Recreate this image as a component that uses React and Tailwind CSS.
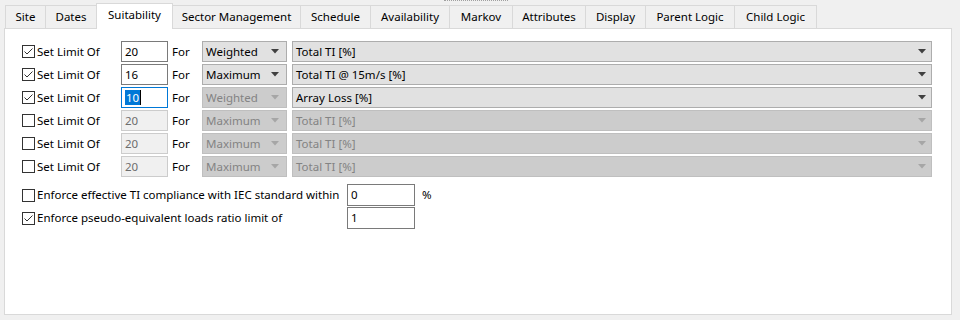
import React from "react";

const tabs = [
  ["Site", 41],
  ["Dates", 51],
  ["Suitability", 76],
  ["Sector Management", 128],
  ["Schedule", 70],
  ["Availability", 79],
  ["Markov", 63],
  ["Attributes", 73],
  ["Display", 60],
  ["Parent Logic", 89],
  ["Child Logic", 82],
];

function CheckBox({ checked }) {
  return (
    <span className="w-[13px] h-[13px] border border-[#333333] bg-white flex items-center justify-center shrink-0">
      {checked && (
        <svg width="11" height="11" viewBox="0 0 11 11">
          <path d="M1.5 5.5 L4 8 L9.5 2.5" fill="none" stroke="#333333" strokeWidth="1" />
        </svg>
      )}
    </span>
  );
}

function Arrow({ disabled }) {
  return (
    <svg width="8" height="5" viewBox="0 0 8 5" className="shrink-0">
      <path d="M0 0 H8 L4 4.5 Z" fill={disabled ? "#a6a6a6" : "#404040"} />
    </svg>
  );
}

function Combo({ width, text, disabled, arrowPad }) {
  return (
    <div
      className={
        "h-[21px] flex items-center justify-between pl-[3px] border " +
        (disabled
          ? "bg-[#cccccc] border-[#bfbfbf] text-[#838383]"
          : "bg-[#e1e1e1] border-[#adadad] text-black")
      }
      style={{ width, paddingRight: arrowPad }}
    >
      <span className="leading-none whitespace-nowrap">{text}</span>
      <Arrow disabled={disabled} />
    </div>
  );
}

const rows = [
  { checked: true, value: "20", agg: "Weighted", aggDis: false, metric: "Total TI [%]", metricDis: false },
  { checked: true, value: "16", agg: "Maximum", aggDis: false, metric: "Total TI @ 15m/s [%]", metricDis: false },
  { checked: true, value: "10", agg: "Weighted", aggDis: true, metric: "Array Loss [%]", metricDis: false, focused: true },
  { checked: false, value: "20", agg: "Maximum", aggDis: true, metric: "Total TI [%]", metricDis: true, inDis: true },
  { checked: false, value: "20", agg: "Maximum", aggDis: true, metric: "Total TI [%]", metricDis: true, inDis: true },
  { checked: false, value: "20", agg: "Maximum", aggDis: true, metric: "Total TI [%]", metricDis: true, inDis: true },
];

export default function App() {
  return (
    <div
      className="relative w-[960px] h-[320px] bg-[#f0f0f0] overflow-hidden text-[11.5px] text-black"
      style={{ fontFamily: '"Noto Sans", "Segoe UI", "Liberation Sans", sans-serif' }}
    >
      {/* splitter grip */}
      <div className="absolute left-[444px] top-0 w-[64px] h-[2px] border-t border-dotted border-[#a0a0a0]" />

      {/* tab strip */}
      <div className="flex items-end h-[25px] mt-[3px] pl-[5px]">
        {tabs.map(([label, w], i) => {
          const sel = label === "Suitability";
          return (
            <div
              key={label}
              className={
                "flex justify-center border-t border-r border-l border-[#d9d9d9] whitespace-nowrap " +
                (i > 0 ? "-ml-px " : "") +
                (sel
                  ? "relative z-10 h-[26px] -mb-px bg-white pt-[3px]"
                  : "h-[23px] bg-[#f0f0f0] pt-[3px]")
              }
              style={{ width: w + (i > 0 ? 1 : 0) }}
            >
              <span className="leading-[15px]">{label}</span>
            </div>
          );
        })}
      </div>

      {/* panel */}
      <div className="ml-[4px] w-[948px] h-[287px] border border-[#d9d9d9] bg-white pt-[12px] pl-[17px]">
        <div className="flex flex-col gap-[2px]">
          {rows.map((r, i) => (
            <div key={i} className="flex items-center h-[21px]">
              <div className="w-[99px] flex items-center">
                <CheckBox checked={r.checked} />
                <span className="ml-[2px] leading-none whitespace-nowrap">Set Limit Of</span>
              </div>
              <div
                className={
                  "w-[47px] h-[21px] border flex items-center pl-[3px] " +
                  (r.focused
                    ? "border-[#0078d7] bg-white"
                    : r.inDis
                    ? "border-[#cccccc] bg-[#f0f0f0] text-[#6d6d6d]"
                    : "border-[#7a7a7a] bg-white")
                }
              >
                {r.focused ? (
                  <span className="flex items-center">
                    <span className="bg-[#0078d7] text-white leading-[15px] px-px">{r.value}</span>
                    <span className="w-px h-[15px] bg-black" />
                  </span>
                ) : (
                  <span className="leading-none">{r.value}</span>
                )}
              </div>
              <span className="ml-[4px] w-[30px] leading-none">For</span>
              <Combo width={85} text={r.agg} disabled={r.aggDis} arrowPad={7} />
              <div className="ml-[5px]">
                <Combo width={640} text={r.metric} disabled={r.metricDis} arrowPad={5} />
              </div>
            </div>
          ))}
        </div>

        <div className="mt-[7px] flex flex-col gap-px">
          <div className="flex items-center h-[22px]">
            <div className="w-[325px] flex items-center">
              <CheckBox checked={false} />
              <span className="ml-[2px] leading-none whitespace-nowrap">Enforce effective TI compliance with IEC standard within</span>
            </div>
            <div className="w-[68px] h-[22px] border border-[#7a7a7a] bg-white flex items-center pl-[3px]">
              <span className="leading-none">0</span>
            </div>
            <span className="ml-[7px] leading-none">%</span>
          </div>
          <div className="flex items-center h-[22px]">
            <div className="w-[325px] flex items-center">
              <CheckBox checked={true} />
              <span className="ml-[2px] leading-none whitespace-nowrap">Enforce pseudo-equivalent loads ratio limit of</span>
            </div>
            <div className="w-[68px] h-[22px] border border-[#7a7a7a] bg-white flex items-center pl-[3px]">
              <span className="leading-none">1</span>
            </div>
          </div>
        </div>
      </div>
    </div>
  );
}
